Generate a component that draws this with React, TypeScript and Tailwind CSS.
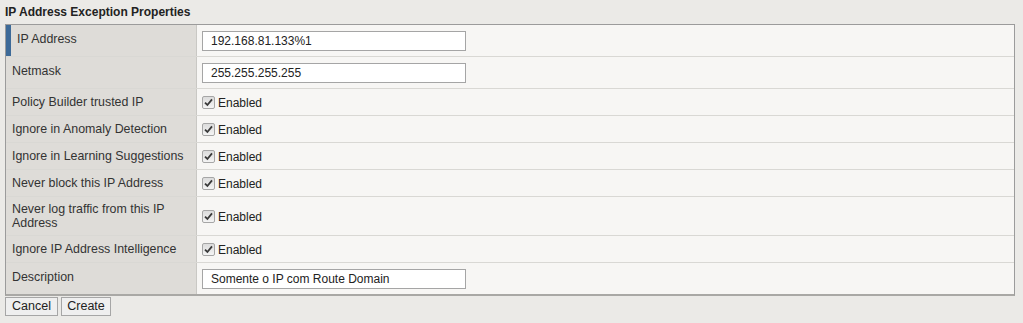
import React from 'react'

type Row = {
  label: string
  kind: 'input' | 'check'
  value?: string
  h: string
  active?: boolean
}

const rows: Row[] = [
  { label: 'IP Address', kind: 'input', value: '192.168.81.133%1', h: 'h-[32px]', active: true },
  { label: 'Netmask', kind: 'input', value: '255.255.255.255', h: 'h-[32px]' },
  { label: 'Policy Builder trusted IP', kind: 'check', h: 'h-[27px]' },
  { label: 'Ignore in Anomaly Detection', kind: 'check', h: 'h-[27px]' },
  { label: 'Ignore in Learning Suggestions', kind: 'check', h: 'h-[27px]' },
  { label: 'Never block this IP Address', kind: 'check', h: 'h-[27px]' },
  { label: 'Never log traffic from this IP Address', kind: 'check', h: 'h-[39px]' },
  { label: 'Ignore IP Address Intelligence', kind: 'check', h: 'h-[27px]' },
  { label: 'Description', kind: 'input', value: 'Somente o IP com Route Domain', h: 'h-[31px]' },
]

// old-style greyed checkbox with a dark tick
function Check() {
  return (
    <span className="mr-[3px] flex h-[13px] w-[13px] items-center justify-center rounded-[2px] border border-[#a6a6a6] bg-gradient-to-b from-[#dcdcdc] to-[#f4f4f4]">
      <svg width="9" height="9" viewBox="0 0 9 9">
        <path d="M1 4.6 L3.4 7 L8 1.4" fill="none" stroke="#3a3a3a" strokeWidth="1.8" />
      </svg>
    </span>
  )
}

export default function App() {
  return (
    <div className="h-[323px] w-[1023px] bg-[#ebeae7] font-['Liberation_Sans',Arial,sans-serif] text-[12px] text-[#333]">
      <div className="flex h-[24px] items-center px-[5px] pb-[1px] font-bold text-[#222]">
        IP Address Exception Properties
      </div>

      <div className="ml-[5px] w-[1010px] border border-[#9b9b9b] border-b-2 border-b-[#a9a8a5]">
        {rows.map((row, i) => (
          <div
            key={row.label}
            className={`flex ${row.h} ${i < rows.length - 1 ? 'border-b border-[#d9d8d4]' : ''}`}
          >
            <div className="flex w-[191px] shrink-0 border-r border-[#c9c8c4] bg-[#dedcd8]">
              {row.active && <div className="w-[5px] shrink-0 bg-[#3d6a98]" />}
              <div
                className={`flex items-center pl-[6px] pr-2 text-[12.4px] leading-[14px] ${
                  row.kind === 'input' ? 'pb-[3px]' : ''
                }`}
              >
                {row.label === 'Never log traffic from this IP Address' ? (
                  <span>
                    Never log traffic from this IP
                    <br />
                    Address
                  </span>
                ) : (
                  row.label
                )}
              </div>
            </div>
            <div className="flex flex-1 items-center bg-[#f7f6f4] pl-[5px]">
              {row.kind === 'input' ? (
                <div className="flex h-[20px] w-[264px] items-center border border-[#a5a5a5] bg-white pl-[8px] text-[#222]">
                  {row.value}
                </div>
              ) : (
                <div className="flex items-center pt-[1px]">
                  <Check />
                  <span className="text-[#222]">Enabled</span>
                </div>
              )}
            </div>
          </div>
        ))}
      </div>

      <div className="mt-[1px] flex gap-[3px] pl-[5px]">
        <button className="h-[19px] w-[53px] border border-[#a6a6a6] bg-[#efefef] text-[12.5px] leading-none text-[#222]">
          Cancel
        </button>
        <button className="h-[19px] w-[50px] border border-[#a6a6a6] bg-[#efefef] text-[12.5px] leading-none text-[#222]">
          Create
        </button>
      </div>
    </div>
  )
}
